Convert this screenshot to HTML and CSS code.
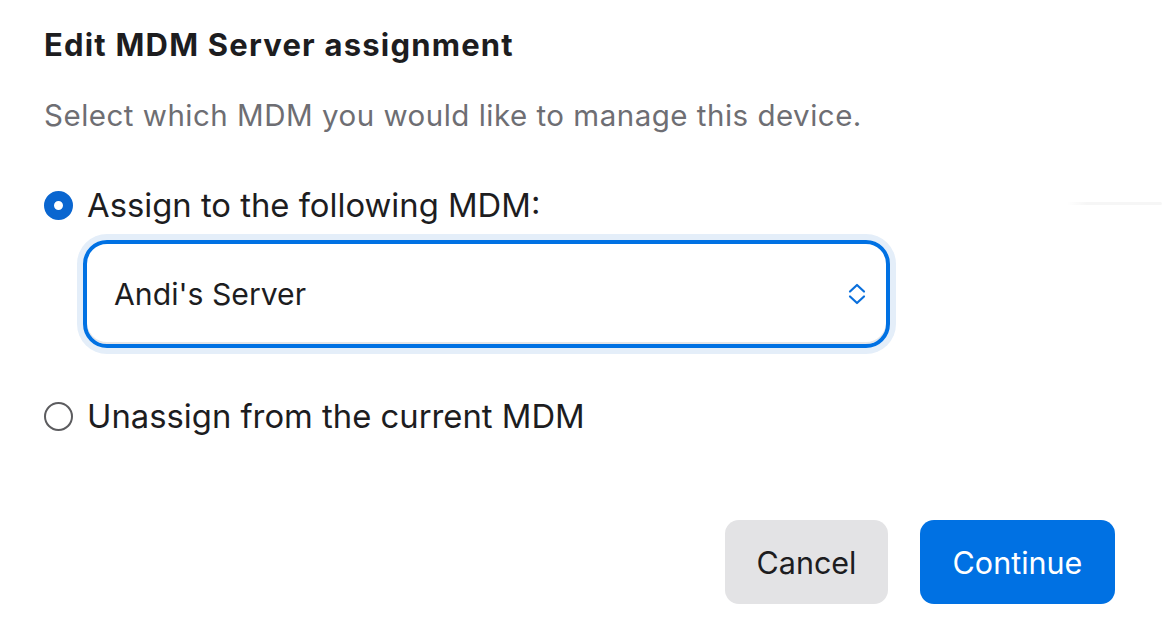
FILE: index.html
```html
<!DOCTYPE html>
<html>
<head>
<meta charset="utf-8">
<link rel="stylesheet" href="styles.css">
</head>
<body>
<div class="dialog">
  <div class="edge-shadow"></div>
  <h1 class="title">Edit MDM Server assignment</h1>
  <p class="subtitle">Select which MDM you would like to manage this device.</p>
  <div class="option">
    <span class="radio checked"></span>
    <span class="label">Assign to the following MDM:</span>
  </div>
  <div class="select">
    <span class="select-value">Andi's Server</span>
    <svg class="chevron" width="18" height="22" viewBox="0 0 18 22">
      <path d="M2 8.5 L9 2 L16 8.5" fill="none" stroke="#0a6fdc" stroke-width="2.2" stroke-linecap="round" stroke-linejoin="round"/>
      <path d="M2 13.5 L9 20 L16 13.5" fill="none" stroke="#0a6fdc" stroke-width="2.2" stroke-linecap="round" stroke-linejoin="round"/>
    </svg>
  </div>
  <div class="option option-second">
    <span class="radio"></span>
    <span class="label">Unassign from the current MDM</span>
  </div>
  <div class="actions">
    <button class="btn btn-cancel">Cancel</button>
    <button class="btn btn-continue">Continue</button>
  </div>
</div>
</body>
</html>
```
FILE: styles.css
```css
html, body {
  margin: 0;
  padding: 0;
  background: #ffffff;
}
body {
  font-family: Inter, "Noto Sans", "Liberation Sans", sans-serif;
  color: #1d1d1f;
}
.dialog {
  position: relative;
  width: 1162px;
  height: 634px;
  box-sizing: border-box;
  padding: 28px 47px 0 44px;
  display: flex;
  flex-direction: column;
}
.edge-shadow {
  position: absolute;
  right: 0;
  top: 202px;
  width: 95px;
  height: 3px;
  background: linear-gradient(to right, rgba(0,0,0,0), rgba(0,0,0,0.035) 20%, rgba(0,0,0,0.035));
  border-radius: 2px;
}
.title {
  margin: 0;
  font-size: 31px;
  line-height: 34px;
  font-weight: 700;
  letter-spacing: 1.2px;
  color: #1d1d1f;
}
.subtitle {
  margin: 36px 0 0 0;
  font-size: 29.5px;
  line-height: 34px;
  font-weight: 400;
  letter-spacing: 0.5px;
  color: #6e6e73;
}
.option {
  display: flex;
  align-items: center;
  gap: 14px;
  margin-top: 55px;
}
.option-second {
  margin-top: 50px;
}
.radio {
  width: 29px;
  height: 29px;
  box-sizing: border-box;
  border-radius: 50%;
  border: 2px solid #5c5c5f;
  flex: none;
}
.radio.checked {
  border: 10.5px solid #0a66d0;
  background: #ffffff;
}
.label {
  font-size: 32.8px;
  line-height: 36px;
  color: #1d1d1f;
}
.select {
  margin: 17px 0 0 39px;
  width: 807px;
  height: 108px;
  box-sizing: border-box;
  border: 4px solid #0071e3;
  border-radius: 24px;
  box-shadow: 0 0 0 6px #e4eef9, inset 0 -2px 0 #e6e6e8;
  display: flex;
  align-items: center;
  justify-content: space-between;
  padding: 0 20px 0 27px;
}
.select-value {
  font-size: 30.2px;
  color: #1d1d1f;
}
.chevron {
  display: block;
}
.actions {
  margin-top: auto;
  margin-bottom: 30px;
  display: flex;
  justify-content: flex-end;
  gap: 32px;
}
.btn {
  height: 84px;
  border: none;
  border-radius: 14px;
  font-family: Inter, "Noto Sans", "Liberation Sans", sans-serif;
  font-size: 30.5px;
  padding: 0;
  cursor: pointer;
}
.btn-cancel {
  width: 163px;
  background: #e3e3e5;
  color: #1d1d1f;
}
.btn-continue {
  width: 195px;
  background: #0071e3;
  color: #ffffff;
}
```
